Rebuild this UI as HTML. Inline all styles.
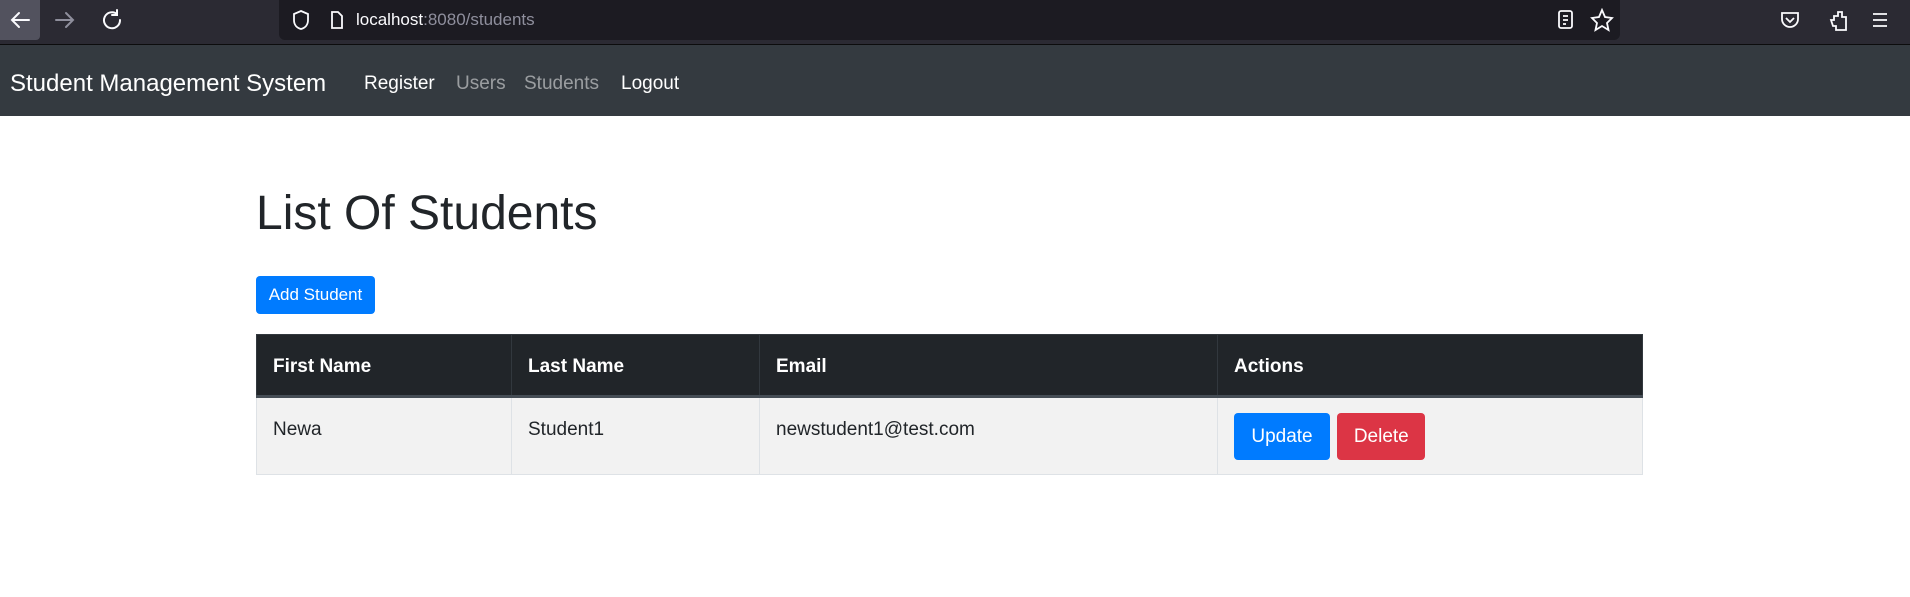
<!DOCTYPE html>
<html><head><meta charset="utf-8"><style>
*{box-sizing:border-box;margin:0;padding:0}
body{width:1910px;height:597px;overflow:hidden;background:#fff;font-family:"Liberation Sans",sans-serif;position:relative}
.tb{position:absolute;left:0;top:0;width:1910px;height:45px;background:#2b2a33;border-bottom:1px solid #0c0c0d}
.url{position:absolute;left:279px;top:0;width:1341px;height:40px;background:#1c1b22;border-radius:0 0 6px 6px}
.nav{position:absolute;left:0;top:45px;width:1910px;height:71px;background:#343a40}
.a{position:absolute;white-space:nowrap}
table{position:absolute;left:256px;top:334px;width:1387px;border-collapse:collapse;font-size:19px}
th{background:#212529;color:#fff;text-align:left;height:62px;padding:4px 16px 0;border:1px solid #32383e;border-bottom:3px solid #454d55;font-weight:bold}
td{background:#f2f2f2;color:#212529;height:78px;padding:20px 16px 0;vertical-align:top;border:1px solid #dee2e6;line-height:23px}
.btn{display:inline-block;color:#fff;border-radius:4px;font-size:19px;text-align:center}
</style></head><body>
<div class="tb">
<div style="position:absolute;left:0;top:0;width:40px;height:40px;background:#52525e;border-radius:0 0 4px 0"></div>
<svg class="a" style="left:0;top:0" width="140" height="40" fill="none" stroke-width="2" stroke-linecap="round">
<path d="M12 20h17M19 13l-7 7 7 7" stroke="#fbfbfe"/>
<path d="M56 20h17M66 13l7 7-7 7" stroke="#8f8f9d"/>
<path d="M117 14a8 8 0 1 0 3 6M117 10v5h-5" stroke="#fbfbfe"/>
</svg>
<div class="url"></div>
<svg class="a" style="left:290px;top:8px" width="60" height="24" fill="none" stroke="#fbfbfe" stroke-width="1.8">
<path d="M11 3l7 3v6c0 5-3 8-7 9-4-1-7-4-7-9V6z"/>
<path d="M42 4h6l4 4v12h-10z"/>
</svg>
<div class="a" style="left:356px;top:10px;font-size:17px;color:#fbfbfe">localhost<span style="color:#8f8f9d">:8080/students</span></div>
<svg class="a" style="left:1555px;top:8px" width="360" height="26" fill="none" stroke="#fbfbfe" stroke-width="1.8">
<rect x="4" y="3" width="13" height="17" rx="2"/><path d="M8 8h5M8 12h5M8 16h3"/>
<path d="M47 2l3 7 7 1-5 5 1.5 7-6.5-4-6.5 4 1.5-7-5-5 7-1z"/>
<path d="M227 5h16v6a8 8 0 0 1-16 0z M231 10l4 4 4-4"/>
<path d="M276 12h3v-4h4v-4h4v5h4v13h-10v-4h-3z"/>
<path d="M318 6h14M318 12h14M318 18h14"/>
</svg>
</div>
<div class="nav">
<div class="a" style="left:10px;top:25px;font-size:24px;color:#fff">Student Management System</div>
<div class="a" style="left:364px;top:28px;font-size:19px;color:#fff">Register</div>
<div class="a" style="left:456px;top:28px;font-size:19px;color:rgba(255,255,255,.5)">Users</div>
<div class="a" style="left:524px;top:28px;font-size:19px;color:rgba(255,255,255,.5)">Students</div>
<div class="a" style="left:621px;top:28px;font-size:19px;color:#fff">Logout</div>
</div>
<div class="a" style="left:256px;top:186px;font-size:48px;color:#212529">List Of Students</div>
<div class="a btn" style="left:256px;top:276px;width:119px;height:38px;line-height:38px;background:#007bff;font-size:17px">Add Student</div>
<table>
<tr><th style="width:255px">First Name</th><th style="width:248px">Last Name</th><th style="width:458px">Email</th><th>Actions</th></tr>
<tr><td>Newa</td><td>Student1</td><td>newstudent1@test.com</td>
<td style="padding-top:15px"><span class="btn" style="width:96px;height:47px;line-height:47px;background:#007bff">Update</span> <span class="btn" style="width:88px;height:47px;line-height:47px;background:#dc3545;margin-left:2px">Delete</span></td></tr>
</table>
</body></html>
